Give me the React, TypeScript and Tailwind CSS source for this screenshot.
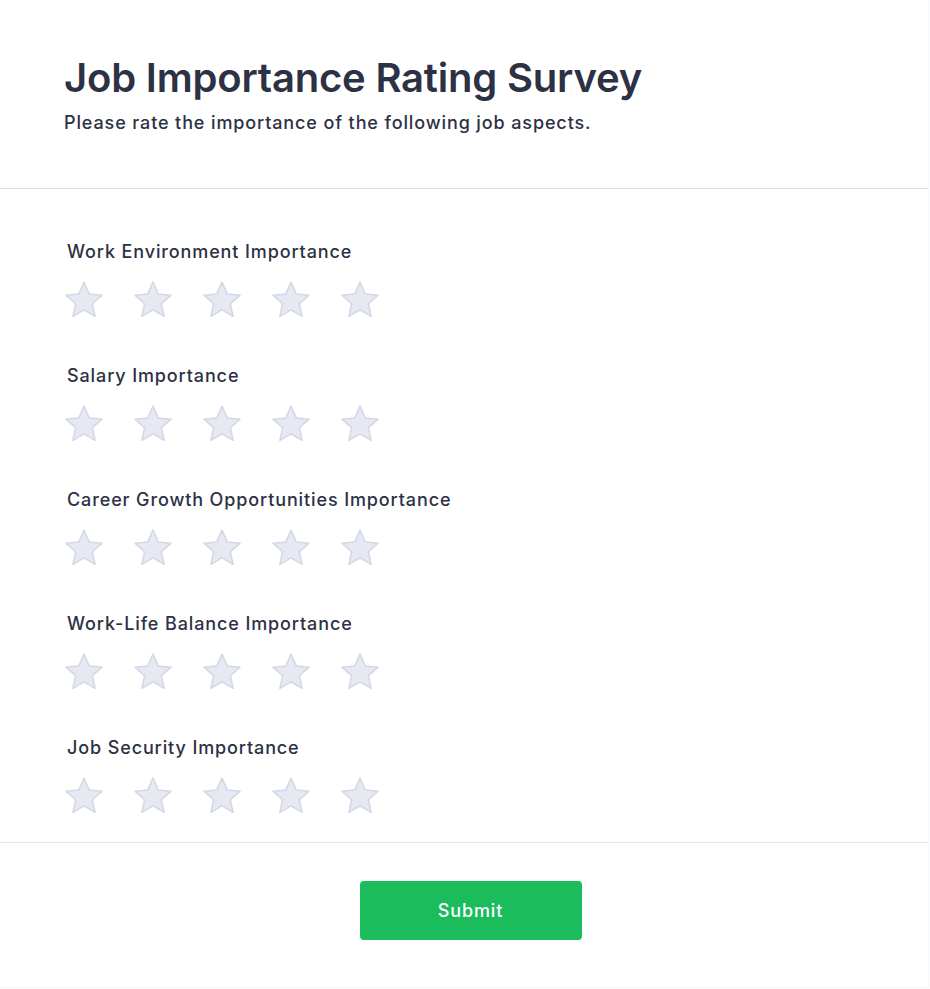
import React from "react";

const questions = [
  "Work Environment Importance",
  "Salary Importance",
  "Career Growth Opportunities Importance",
  "Work-Life Balance Importance",
  "Job Security Importance",
];

function starPoints(cx: number, cy: number, R: number, r: number) {
  const pts: string[] = [];
  for (let i = 0; i < 10; i++) {
    const rad = i % 2 === 0 ? R : r;
    const a = (-90 + i * 36) * (Math.PI / 180);
    pts.push(`${(cx + rad * Math.cos(a)).toFixed(2)},${(cy + rad * Math.sin(a)).toFixed(2)}`);
  }
  return pts.join(" ");
}

function Star() {
  return (
    <svg width="40" height="40" viewBox="0 0 40 40" className="block">
      <polygon
        points={starPoints(20, 21, 19, 8.8)}
        fill="#e6e8f2"
        stroke="#d3d7e6"
        strokeWidth="1.5"
        strokeLinejoin="round"
      />
    </svg>
  );
}

export default function App() {
  return (
    <div
      className="w-[930px] min-h-[989px] bg-white text-[#2d3144]"
      style={{ fontFamily: "Inter, 'Noto Sans', sans-serif" }}
    >
      <div className="w-[929px] h-[988px] border-r border-b border-[#f5f6f9]">
        <header className="h-[189px] border-b border-[#dcdeeb] px-[64px] pt-[54px]">
          <h1 className="text-[40px] leading-[48px] font-semibold tracking-[-0.2px]">
            Job Importance Rating Survey
          </h1>
          <p className="mt-[9px] text-[18px] leading-[24px] font-medium tracking-[0.88px]">
            Please rate the importance of the following job aspects.
          </p>
        </header>
        <main className="px-[64px] pt-[51px] pb-[26px] border-b border-[#e4e6ee] flex flex-col gap-[44px]">
          {questions.map((q) => (
            <div key={q} className="flex flex-col gap-[16px]">
              <div className="pl-[3px] text-[18px] leading-[24px] font-medium tracking-[0.88px]">{q}</div>
              <div className="flex gap-[29px]">
                {[0, 1, 2, 3, 4].map((i) => (
                  <Star key={i} />
                ))}
              </div>
            </div>
          ))}
        </main>
        <footer className="flex justify-center pt-[38px] pl-[13px]">
          <button className="w-[222px] h-[59px] rounded-[4px] bg-[#1abc5c] text-white text-[18px] font-medium tracking-[0.9px]">
            Submit
          </button>
        </footer>
      </div>
    </div>
  );
}
